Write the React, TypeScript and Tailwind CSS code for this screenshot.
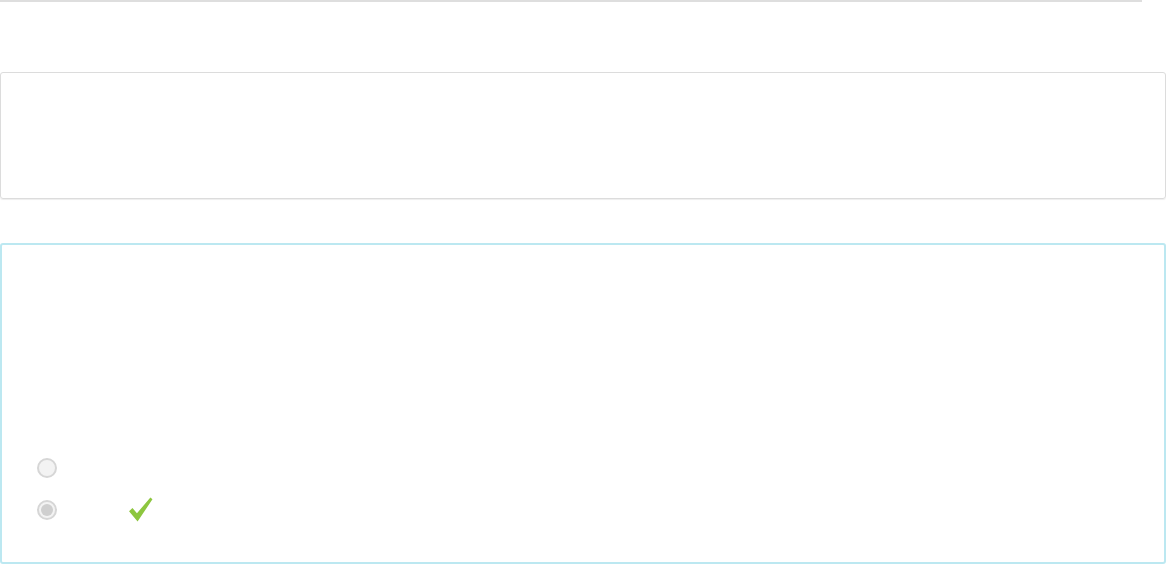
import React from 'react';

function Radio({ checked }: { checked?: boolean }) {
  return (
    <span className="flex h-5 w-5 shrink-0 items-center justify-center rounded-full border-2 border-[#d6d6d6] bg-[#f3f3f3]">
      {checked && <span className="h-3 w-3 rounded-full bg-[#cfcfcf]" />}
    </span>
  );
}

function Check() {
  return (
    <svg width="25" height="25" viewBox="0 0 24 24" className="shrink-0">
      <path d="M1 13.6 L4.3 10.6 L8.6 15.6 L21.5 0.5 L23.5 2.2 L9.2 23.5 Z" fill="#8dc63f" />
    </svg>
  );
}

export default function App() {
  return (
    <div className="h-[564px] w-[1166px] overflow-hidden bg-white font-['Liberation_Sans',sans-serif]">
      <div className="h-[2px] w-[1142px] bg-[#dedede]" />

      <div className="mt-[70px] h-[127px] rounded-[3px] border border-[#dcdcdc] shadow-[0_1px_1px_rgba(0,0,0,0.07)]" />

      <div className="mt-[44px] h-[321px] rounded-[3px] border-2 border-[#bce8f1] pl-[35px] pt-[213px]">
        <div className="flex flex-col gap-5">
          <div className="flex items-center">
            <Radio />
          </div>
          <div className="flex items-center">
            <Radio checked />
            <span className="ml-[71px] -mt-[1px]">
              <Check />
            </span>
          </div>
        </div>
      </div>
    </div>
  );
}
